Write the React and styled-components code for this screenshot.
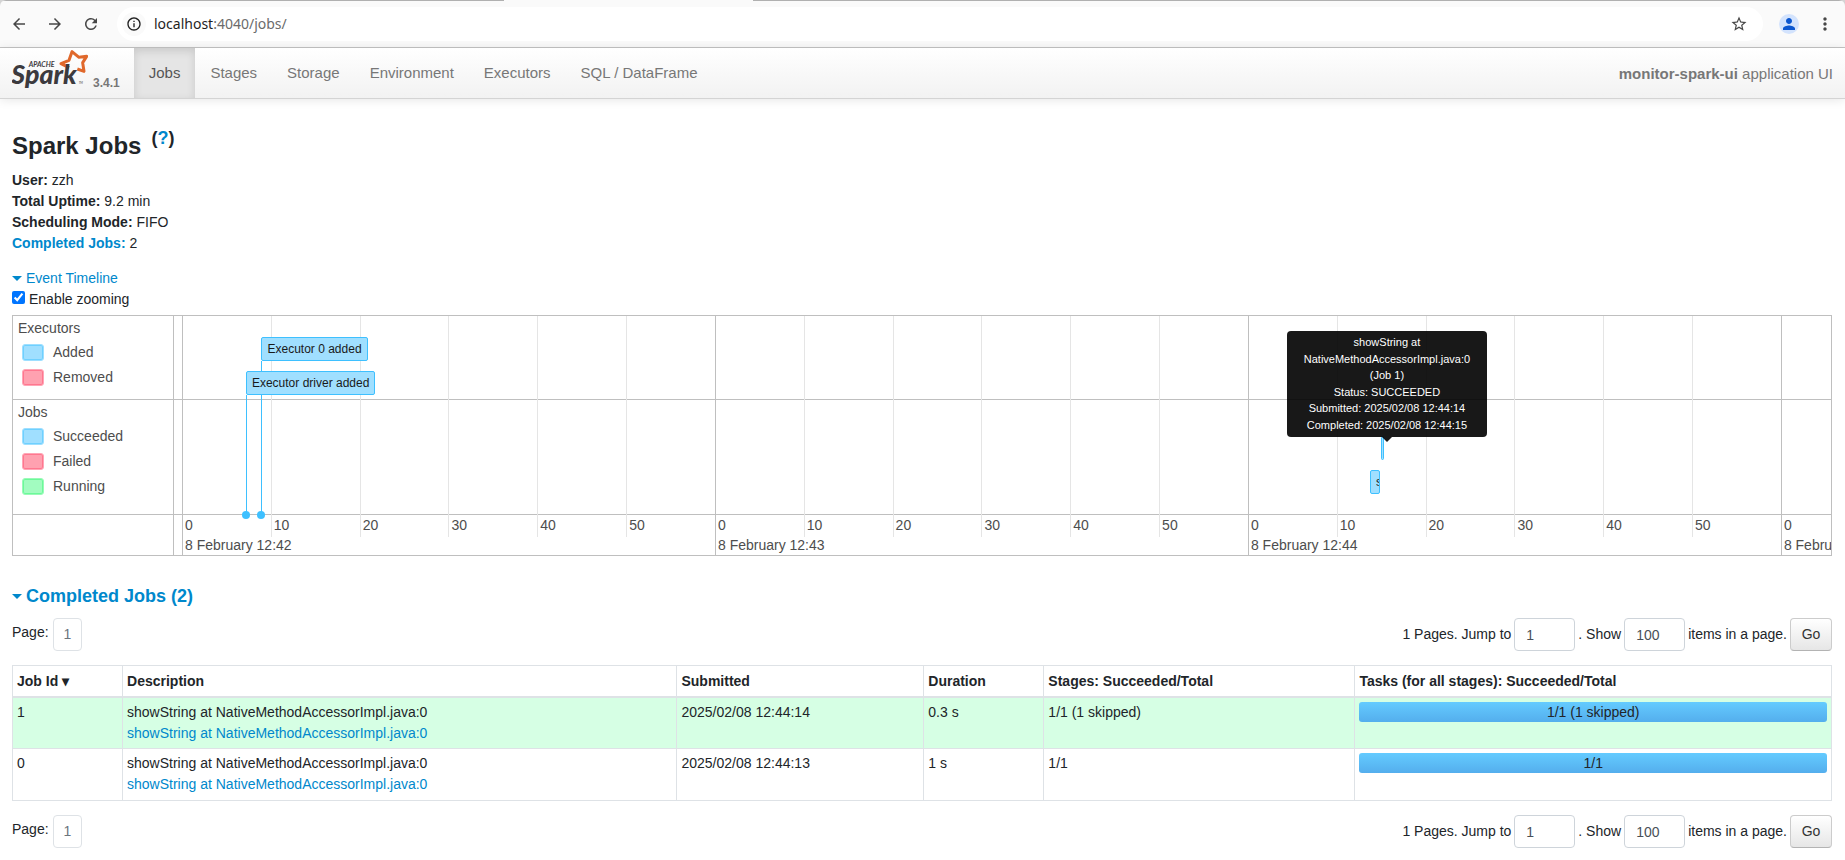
import React from "react";
import styled, { createGlobalStyle } from "styled-components";
import {
  MdArrowBack,
  MdArrowForward,
  MdInfoOutline,
  MdMoreVert,
  MdPerson,
  MdRefresh,
  MdStarBorder,
} from "react-icons/md";

const GlobalStyle = createGlobalStyle`
  *, *::before, *::after { box-sizing: border-box; }
  body {
    margin: 0;
    background: #fff;
    color: #212529;
    font: 14px/21px "Liberation Sans", Arial, sans-serif;
  }
  a { color: #0088cc; text-decoration: none; }
  button, input { font: inherit; }
`;

/* ---------- browser toolbar ---------- */

const Browser = styled.header`
  background: #d4d4d4;
`;

const Toolbar = styled.div`
  display: flex;
  align-items: center;
  height: 48px;
  padding: 0 10px;
  border-bottom: 1px solid #c4c4c4;
  border-radius: 6px 6px 0 0;
  background:
    linear-gradient(90deg, #b0b0b0 504px, #fafafa 504px, #fafafa 753px, #b0b0b0 753px) top / 100% 1px no-repeat,
    #fafafa;
`;

const IconButton = styled.button`
  display: flex;
  align-items: center;
  justify-content: center;
  padding: 0;
  border: 0;
  border-radius: 50%;
  background: ${(p) => p.$bg || "transparent"};
  color: ${(p) => p.$color || "#474747"};
  font-size: ${(p) => p.$icon || 18}px;
  width: ${(p) => p.$size || 18}px;
  height: ${(p) => p.$size || 18}px;
`;

const History = styled.div`
  display: flex;
  gap: 18px;
  margin-right: 17px;
`;

const AddressBar = styled.div`
  flex: 1;
  display: flex;
  align-items: center;
  gap: 8px;
  height: 34px;
  padding: 0 15px 0 5px;
  border-radius: 17px;
  background: #fff;
`;

const Address = styled.span`
  flex: 1;
  color: #6b6b6b;
  font: 14px/20px "Noto Sans", "Open Sans", sans-serif;
`;

const Host = styled.span`
  color: #1f1f1f;
`;

const BrowserActions = styled.div`
  display: flex;
  align-items: center;
  gap: 16px;
  margin-left: 16px;
`;

/* ---------- Spark navigation bar ---------- */

const Navbar = styled.nav`
  display: flex;
  align-items: stretch;
  height: 51px;
  padding: 0 12px;
  border-bottom: 1px solid #d4d4d4;
  background: linear-gradient(#fff, #f2f2f2);
  box-shadow: 0 1px 10px rgba(0, 0, 0, 0.1);
  color: #777;
  font-size: 15px;
`;

const Brand = styled.a`
  display: flex;
  align-items: flex-start;
  gap: 5px;
  padding-top: 2px;
  margin-right: 14px;
`;

const Version = styled.span`
  align-self: flex-end;
  padding-bottom: 6px;
  color: #777;
  font-size: 12px;
  font-weight: bold;
  line-height: 18px;
`;

const NavLink = styled.a`
  display: flex;
  align-items: center;
  padding: 0 15px 2px;
  color: ${(p) => (p.$active ? "#555" : "#777")};
  background: ${(p) => (p.$active ? "#e5e5e5" : "none")};
  box-shadow: ${(p) => (p.$active ? "inset 0 3px 8px rgba(0, 0, 0, 0.125)" : "none")};
`;

const AppName = styled.span`
  margin: auto 0 auto auto;
`;

/* ---------- summary ---------- */

const Main = styled.main`
  padding: 32px 13px 0 12px;
`;

const Title = styled.h3`
  display: flex;
  gap: 10px;
  margin: 0 0 10px;
  font-size: 24px;
  line-height: 29px;
`;

const Help = styled.span`
  font-size: 18px;
  line-height: 14px;
`;

const Summary = styled.ul`
  margin: 0 0 14px;
  padding: 0;
  list-style: none;
`;

const Toggle = styled.a`
  display: flex;
  align-items: center;
  gap: 4px;
`;

const Caret = styled.span`
  border: 5px solid transparent;
  border-top-color: currentColor;
  border-bottom: 0;
`;

const SectionTitle = styled.h4`
  margin: 29px 0 11px;
  font-size: 18px;
  line-height: 22px;
`;

const ZoomLabel = styled.label`
  display: flex;
  align-items: flex-start;
  gap: 4px;
  margin-bottom: 5px;
`;

const Checkbox = styled.input`
  width: 13px;
  height: 13px;
  margin: 2px 0 0;
  accent-color: #0075ff;
`;

/* ---------- timeline ---------- */

const TimelineFrame = styled.div`
  display: grid;
  grid-template-columns: 161px 1fr;
  grid-template-rows: auto auto 40px;
  border: 1px solid #bfbfbf;
  color: #4d4d4d;
`;

const Group = styled.div`
  grid-column: 1;
  grid-row: ${(p) => p.$row};
  padding: 2px 5px ${(p) => p.$bottom}px;
  border-right: 1px solid #bfbfbf;
  border-bottom: 1px solid #bfbfbf;
`;

const GroupTrack = styled.div`
  grid-column: 2;
  grid-row: ${(p) => p.$row};
  border-bottom: 1px solid #bfbfbf;
`;

const AxisCorner = styled.div`
  grid-column: 1;
  grid-row: 3;
  border-right: 1px solid #bfbfbf;
`;

const GroupName = styled.div`
  margin-bottom: 2px;
  line-height: 20px;
`;

const LegendItem = styled.div`
  display: flex;
  align-items: center;
  gap: 9px;
  padding-left: 4px;
  line-height: 25px;
`;

const swatches = {
  blue: ["#a0dfff", "#9edfff", "#6fd0ff"],
  red: ["#ffa1b0", "#ffa6b6", "#ff778f"],
  green: ["#a2fcc0", "#9afab8", "#6cf999"],
};

const Swatch = styled.span`
  width: 22px;
  height: 17px;
  border: 1px solid ${(p) => swatches[p.$tone][1]};
  border-radius: 3px;
  background: ${(p) => swatches[p.$tone][0]};
  box-shadow: inset 0 0 0 1px ${(p) => swatches[p.$tone][2]};
`;

const Canvas = styled.div`
  grid-column: 2;
  grid-row: 1 / 4;
  position: relative;
  overflow: hidden;
`;

const GridLine = styled.div`
  position: absolute;
  top: 0;
  height: ${(p) => (p.$major ? "100%" : "221px")};
  border-left: 1px solid ${(p) => (p.$major ? "#bfbfbf" : "#e5e5e5")};
`;

const AxisLabel = styled.div`
  position: absolute;
  top: ${(p) => (p.$major ? 219 : 199)}px;
  padding-left: 3px;
  line-height: 20px;
  white-space: nowrap;
`;

const Stem = styled.div`
  position: absolute;
  top: ${(p) => p.$top}px;
  bottom: 40px;
  border-left: 1px solid #3ec0ff;
`;

const Dot = styled.div`
  position: absolute;
  bottom: 36px;
  width: 8px;
  height: 8px;
  margin-left: -4px;
  border-radius: 50%;
  background: #3ec0ff;
`;

const Item = styled.div`
  position: absolute;
  top: ${(p) => p.$top}px;
  height: 24px;
  padding: 0 5px;
  border: 1px solid #3ec0ff;
  border-radius: 2px;
  background: #a0dfff;
  color: #1a1a1a;
  font-size: 12px;
  line-height: 22px;
  white-space: nowrap;
  overflow: hidden;
`;

const JobRange = styled(Item)`
  width: ${(p) => p.$width}px;
  padding: 0 0 0 ${(p) => (p.$width < 10 ? 0 : 5)}px;
`;

const Tooltip = styled.div`
  position: absolute;
  top: 15px;
  width: 200px;
  margin-left: -100px;
  padding: 3px 8px 4px;
  border-radius: 4px;
  background: #000;
  color: #fff;
  font-size: 11px;
  line-height: 1.5;
  text-align: center;
  opacity: 0.9;

  &::after {
    content: "";
    position: absolute;
    top: 100%;
    left: 50%;
    margin-left: -5px;
    border: 5px solid transparent;
    border-top-color: #000;
    border-bottom: 0;
  }
`;

/* ---------- pagination and table ---------- */

const Pagination = styled.form`
  display: flex;
  align-items: flex-start;
  gap: 4px;
`;

const PageLabel = styled.span`
  line-height: 28px;
`;

const PageLink = styled.a`
  height: 33px;
  padding: 0 10px;
  border: 1px solid #dee2e6;
  border-radius: 4px;
  color: #6c757d;
  line-height: 31px;
`;

const JumpControls = styled.div`
  display: flex;
  align-items: center;
  gap: 3px;
  margin-left: auto;
`;

const Field = styled.label`
  display: flex;
  align-items: center;
  gap: 3px;
`;

const NumberBox = styled.input`
  width: 61px;
  height: 33px;
  padding: 0 11px;
  border: 1px solid #ced4da;
  border-radius: 4px;
  background: #fff;
  color: #495057;
`;

const GoButton = styled.button`
  width: 42px;
  height: 33px;
  padding: 0;
  border: 1px solid #ccc;
  border-bottom-color: #b3b3b3;
  border-radius: 4px;
  background: linear-gradient(#fff, #e6e6e6);
  color: #333;
`;

const JobsTable = styled.table`
  width: 100%;
  margin: 14px 0;
  border-collapse: collapse;
  table-layout: fixed;
`;

const HeadCell = styled.th`
  width: ${(p) => p.$width};
  padding: 4px;
  border: 1px solid #dee2e6;
  border-bottom-width: 2px;
  text-align: left;
  line-height: 22px;
`;

const Row = styled.tr`
  background: ${(p) => (p.$striped ? "#d6ffe4" : "#fff")};
`;

const Cell = styled.td`
  padding: 4px;
  border: 1px solid #dee2e6;
  vertical-align: top;

  tr:last-child > & {
    padding-bottom: 5px;
  }
`;

const StageLink = styled.a`
  display: block;
`;

const Progress = styled.div`
  height: 20px;
  border-radius: 3px;
  background: linear-gradient(#64cbff, #54aeed);
  line-height: 20px;
  text-align: center;
`;

/* ---------- data ---------- */

const columns = [
  ["Job Id ▾", "6.05%"],
  ["Description", "30.48%"],
  ["Submitted", "13.57%"],
  ["Duration", "6.6%"],
  ["Stages: Succeeded/Total", "17.1%"],
  ["Tasks (for all stages): Succeeded/Total", "26.2%"],
];

const jobs = [
  { id: 1, submitted: "2025/02/08 12:44:14", duration: "0.3 s", progress: "1/1 (1 skipped)" },
  { id: 0, submitted: "2025/02/08 12:44:13", duration: "1 s", progress: "1/1" },
];

const JOB_NAME = "showString at NativeMethodAccessorImpl.java:0";

/* Seconds are counted from 12:42:00; the window opens a little before that. */
const WINDOW_START = -0.9;
const WINDOW_LENGTH = 186.54;
const at = (seconds) => ({ left: `${((seconds - WINDOW_START) / WINDOW_LENGTH) * 100}%` });

const ticks = Array.from({ length: 19 }, (_, i) => i * 10);

const executors = [
  { name: "Executor 0 added", time: 8.95, top: 21 },
  { name: "Executor driver added", time: 7.2, top: 55 },
];

function SparkLogo() {
  return (
    <svg width="76" height="40" viewBox="36 150 228 120" role="img" aria-label="Apache Spark">
      <path
        d="M232 207 L252 214 L248 188 L260 169 L237 172 L216 155 L207 181 L183 191 L207 203"
        fill="none"
        stroke="#e0682b"
        strokeWidth="9"
        strokeLinejoin="round"
      />
      <g fill="#3c3a3e" fontFamily="Lato, sans-serif" fontStyle="italic">
        <text x="34" y="252" fontSize="80" fontWeight="900">Spark</text>
        <text x="86" y="202" fontSize="21" fontWeight="700">APACHE</text>
        <text x="236" y="252" fontSize="9">TM</text>
      </g>
    </svg>
  );
}

function Legend({ name, entries, bottom, row }) {
  return (
    <Group $row={row} $bottom={bottom}>
      <GroupName>{name}</GroupName>
      {entries.map(([label, tone]) => (
        <LegendItem key={label}>
          <Swatch $tone={tone} />
          {label}
        </LegendItem>
      ))}
    </Group>
  );
}

function Timeline() {
  return (
    <TimelineFrame>
      <Legend row={1} name="Executors" bottom={9} entries={[["Added", "blue"], ["Removed", "red"]]} />
      <GroupTrack $row={1} />
      <Legend
        row={2}
        name="Jobs"
        bottom={15}
        entries={[["Succeeded", "blue"], ["Failed", "red"], ["Running", "green"]]}
      />
      <GroupTrack $row={2} />
      <AxisCorner />
      <Canvas>
        {ticks.map((t) => (
          <React.Fragment key={t}>
            <GridLine $major={t % 60 === 0} style={at(t)} />
            <AxisLabel style={at(t)}>{t % 60}</AxisLabel>
            {t % 60 === 0 && (
              <AxisLabel $major style={at(t)}>8 February 12:{42 + t / 60}</AxisLabel>
            )}
          </React.Fragment>
        ))}
        {executors.map((e) => (
          <React.Fragment key={e.name}>
            <Stem $top={e.top + 24} style={at(e.time)} />
            <Dot style={at(e.time)} />
            <Item $top={e.top} style={at(e.time)}>{e.name}</Item>
          </React.Fragment>
        ))}
        <JobRange $top={120} $width={3} style={at(134.97)} />
        <JobRange $top={154} $width={10} style={at(133.75)}>{JOB_NAME} (Job 0)</JobRange>
        <Tooltip role="tooltip" style={at(135.65)}>
          {JOB_NAME} (Job 1)
          <br />
          Status: SUCCEEDED
          <br />
          Submitted: 2025/02/08 12:44:14
          <br />
          Completed: 2025/02/08 12:44:15
        </Tooltip>
      </Canvas>
    </TimelineFrame>
  );
}

function Pager() {
  return (
    <Pagination onSubmit={(e) => e.preventDefault()}>
      <PageLabel>Page:</PageLabel>
      <PageLink href="#page-1">1</PageLink>
      <JumpControls>
        <Field>
          1 Pages. Jump to
          <NumberBox type="text" defaultValue="1" />
        </Field>
        <Field>
          . Show
          <NumberBox type="text" defaultValue="100" />
        </Field>
        <span>items in a page.</span>
        <GoButton type="submit">Go</GoButton>
      </JumpControls>
    </Pagination>
  );
}

export default function App() {
  return (
    <>
      <GlobalStyle />
      <Browser>
        <Toolbar>
          <History>
            <IconButton aria-label="Back"><MdArrowBack /></IconButton>
            <IconButton aria-label="Forward"><MdArrowForward /></IconButton>
            <IconButton aria-label="Reload"><MdRefresh /></IconButton>
          </History>
          <AddressBar>
            <IconButton aria-label="Site information" $size={24} $icon={16} $bg="#fafafa" $color="#1f1f1f">
              <MdInfoOutline />
            </IconButton>
            <Address><Host>localhost</Host>:4040/jobs/</Address>
            <IconButton aria-label="Bookmark"><MdStarBorder /></IconButton>
          </AddressBar>
          <BrowserActions>
            <IconButton aria-label="Profile" $size={20} $bg="#d3e3fd" $color="#0b57d0">
              <MdPerson />
            </IconButton>
            <IconButton aria-label="Menu" $size={20} $icon={20}><MdMoreVert /></IconButton>
          </BrowserActions>
        </Toolbar>
      </Browser>

      <Navbar>
        <Brand href="#home">
          <SparkLogo />
          <Version>3.4.1</Version>
        </Brand>
        {["Jobs", "Stages", "Storage", "Environment", "Executors", "SQL / DataFrame"].map((name, i) => (
          <NavLink key={name} href={`#${name}`} $active={i === 0}>{name}</NavLink>
        ))}
        <AppName><strong>monitor-spark-ui</strong> application UI</AppName>
      </Navbar>

      <Main>
        <Title>
          Spark Jobs
          <Help>(<a href="#help">?</a>)</Help>
        </Title>
        <Summary>
          <li><strong>User:</strong> zzh</li>
          <li><strong>Total Uptime:</strong> 9.2 min</li>
          <li><strong>Scheduling Mode:</strong> FIFO</li>
          <li><a href="#completed"><strong>Completed Jobs:</strong></a> 2</li>
        </Summary>

        <Toggle href="#timeline"><Caret />Event Timeline</Toggle>
        <ZoomLabel>
          <Checkbox type="checkbox" defaultChecked />
          Enable zooming
        </ZoomLabel>
        <Timeline />

        <SectionTitle id="completed">
          <Toggle href="#completed"><Caret />Completed Jobs (2)</Toggle>
        </SectionTitle>
        <Pager />
        <JobsTable>
          <thead>
            <tr>
              {columns.map(([name, width]) => (
                <HeadCell key={name} $width={width}>{name}</HeadCell>
              ))}
            </tr>
          </thead>
          <tbody>
            {jobs.map((job, i) => (
              <Row key={job.id} $striped={i % 2 === 0}>
                <Cell>{job.id}</Cell>
                <Cell>
                  {JOB_NAME}
                  <StageLink href={`#job-${job.id}`}>{JOB_NAME}</StageLink>
                </Cell>
                <Cell>{job.submitted}</Cell>
                <Cell>{job.duration}</Cell>
                <Cell>{job.progress}</Cell>
                <Cell><Progress>{job.progress}</Progress></Cell>
              </Row>
            ))}
          </tbody>
        </JobsTable>
        <Pager />
      </Main>
    </>
  );
}
